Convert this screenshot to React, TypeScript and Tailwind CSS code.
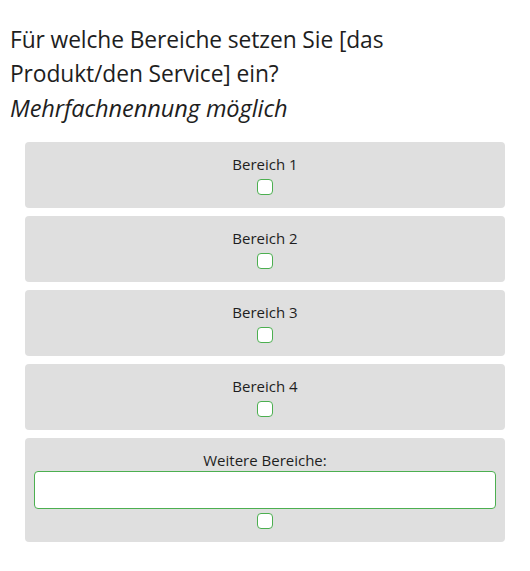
import React from "react";

const Box = () => (
  <span className="block w-4 h-4 rounded-[4px] border-[1.5px] border-[#4caf50] bg-white" />
);

export default function App() {
  const items = ["Bereich 1", "Bereich 2", "Bereich 3", "Bereich 4"];
  return (
    <div
      className="w-[530px] h-[571px] bg-white text-[#1e1e1e]"
      style={{ fontFamily: '"Open Sans", "Noto Sans", sans-serif' }}
    >
      <div className="pt-[23px] pl-[10px] pr-[10px] text-[22.8px] leading-[34px] tracking-[-0.1px]">
        <div>
          Für welche Bereiche setzen Sie [das
          <br />
          Produkt/den Service] ein?
        </div>
        <div className="italic text-[23.6px]">Mehrfachnennung möglich</div>
      </div>
      <div className="mt-[17px] mx-[25px] flex flex-col gap-2">
        {items.map((t) => (
          <div
            key={t}
            className="bg-[#dfdfdf] rounded-[4px] pt-[11px] pb-[13px] flex flex-col items-center"
          >
            <div className="text-[15px] leading-[22px]">{t}</div>
            <div className="mt-[4px]">
              <Box />
            </div>
          </div>
        ))}
        <div className="bg-[#dfdfdf] rounded-[4px] pt-[12px] pb-[13px] px-[9px] flex flex-col items-center">
          <div className="text-[15px] leading-[20px]">Weitere Bereiche:</div>
          <input
            type="text"
            className="mt-[1px] w-full h-[38px] rounded-[4px] border border-[#4caf50] bg-white outline-none"
          />
          <div className="mt-[4px]">
            <Box />
          </div>
        </div>
      </div>
    </div>
  );
}
